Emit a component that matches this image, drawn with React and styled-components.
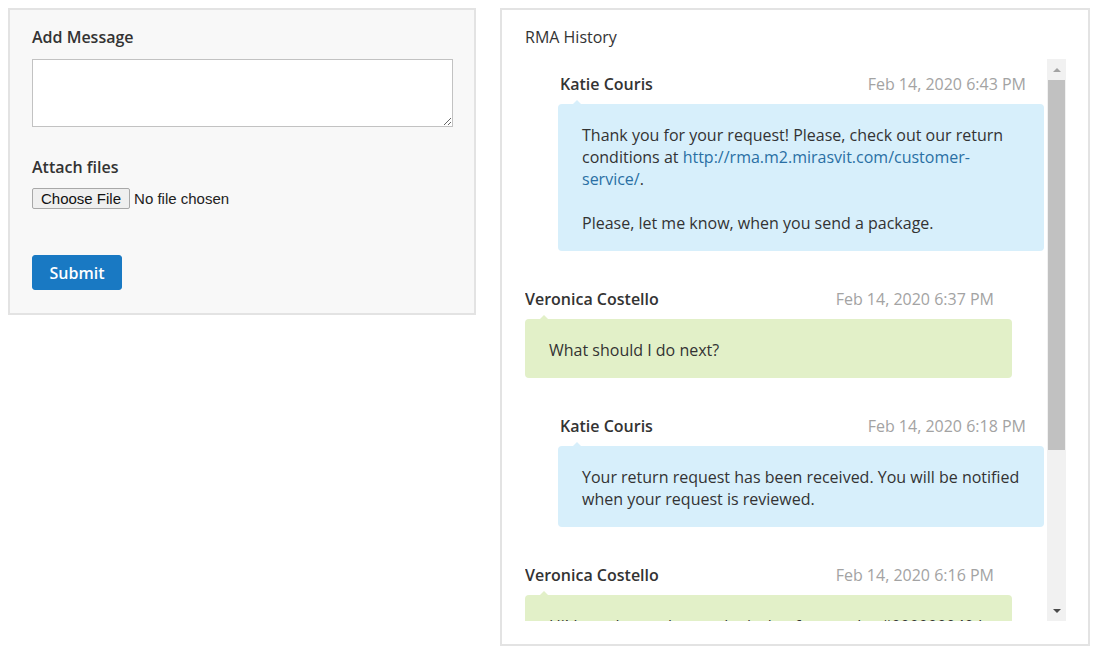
import React from "react";
import styled, { createGlobalStyle } from "styled-components";

const GlobalStyle = createGlobalStyle`
  body {
    margin: 0;
    background: #fff;
    font-family: "Open Sans", "Noto Sans", sans-serif;
    color: #333;
  }
`;

const Page = styled.div`
  display: flex;
  align-items: flex-start;
  gap: 24px;
  padding: 8px;
`;

const FormPanel = styled.form`
  width: 468px;
  box-sizing: border-box;
  background: #f8f8f8;
  border: 2px solid #e3e3e3;
  padding: 16px 22px 23px;
  display: flex;
  flex-direction: column;
`;

const Label = styled.label`
  font-size: 16px;
  line-height: 22px;
  font-weight: 600;
  color: #333;
  margin-bottom: ${(p) => p.$gap || 10}px;
`;

const MessageBox = styled.textarea`
  width: 421px;
  height: 68px;
  box-sizing: border-box;
  border: 1px solid #c2c2c2;
  background: #fff;
  margin: 0 0 29px;
  padding: 6px 8px;
  font: 14px "Open Sans", sans-serif;
`;

const FileInput = styled.input`
  font: 15px "Liberation Sans", Arial, sans-serif;
  color: #222;
  height: 21px;
  margin: 0;
  padding: 0;

  &::file-selector-button {
    font: 15px "Liberation Sans", Arial, sans-serif;
    color: #111;
    height: 21px;
    padding: 0 8px;
    margin: 0 4px 0 0;
    background: #efefef;
    border: 1px solid #a8a8a8;
    border-radius: 2px;
  }
`;

const SubmitButton = styled.button`
  align-self: flex-start;
  margin-top: 46px;
  width: 90px;
  height: 35px;
  background: #1979c3;
  border: 1px solid #1979c3;
  border-radius: 3px;
  color: #fff;
  font: 600 16px "Open Sans", sans-serif;
  cursor: pointer;
`;

const HistoryPanel = styled.section`
  width: 590px;
  height: 638px;
  box-sizing: border-box;
  border: 2px solid #e3e3e3;
  padding: 16px 22px 23px 23px;
  display: flex;
  flex-direction: column;
`;

const Title = styled.div`
  font-size: 16px;
  line-height: 22px;
  color: #333;
  margin-bottom: 11px;
`;

const ScrollBox = styled.div`
  height: 562px;
  display: flex;
`;

const Thread = styled.div`
  flex: 1;
  overflow: hidden;
  padding-top: 14px;
  display: flex;
  flex-direction: column;
  gap: 37px;
`;

const Scrollbar = styled.div`
  width: 19px;
  background: #f1f1f1;
  display: flex;
  flex-direction: column;
`;

const ScrollArrow = styled.div`
  height: 21px;
  flex-shrink: 0;
  display: flex;
  align-items: center;
  justify-content: center;

  &::after {
    content: "";
    border-left: 4px solid transparent;
    border-right: 4px solid transparent;
    ${(p) =>
      p.$down
        ? "border-top: 4px solid #4a4a4a;"
        : "border-bottom: 4px solid #a3a3a3;"}
  }
`;

const ScrollThumb = styled.div`
  height: 370px;
  margin: 0 1px;
  background: #c1c1c1;
`;

const ScrollTrack = styled.div`
  flex: 1;
`;

const Message = styled.div`
  flex-shrink: 0;
  display: flex;
  flex-direction: column;
  gap: 9px;
  padding: ${(p) => (p.$staff ? "0 3px 0 33px" : "0 35px 0 0")};
`;

const Header = styled.div`
  display: flex;
  justify-content: space-between;
  padding: ${(p) => (p.$staff ? "0 18px 0 2px" : "0 18px 0 0")};
  font-size: 16px;
  line-height: 22px;
`;

const Author = styled.span`
  font-weight: 600;
  color: #333;
`;

const Date = styled.span`
  color: #a3a3a3;
`;

const Bubble = styled.div`
  position: relative;
  background: ${(p) => (p.$staff ? "#d7effb" : "#e2f0c8")};
  border-radius: 4px;
  padding: 20px 24px 17px;
  font-size: 16px;
  line-height: 22px;
  color: #333;

  &::before {
    content: "";
    position: absolute;
    top: -4px;
    left: 15px;
    border-left: 4px solid transparent;
    border-right: 4px solid transparent;
    border-bottom: 4px solid ${(p) => (p.$staff ? "#d7effb" : "#e2f0c8")};
  }

  a {
    color: #2a6fa4;
    text-decoration: none;
  }
`;

const messages = [
  {
    staff: true,
    author: "Katie Couris",
    date: "Feb 14, 2020 6:43 PM",
    body: (
      <>
        Thank you for your request! Please, check out our return conditions at{" "}
        <a href="#">http://rma.m2.mirasvit.com/customer-service/</a>.
        <br />
        <br />
        Please, let me know, when you send a package.
      </>
    ),
  },
  {
    staff: false,
    author: "Veronica Costello",
    date: "Feb 14, 2020 6:37 PM",
    body: "What should I do next?",
  },
  {
    staff: true,
    author: "Katie Couris",
    date: "Feb 14, 2020 6:18 PM",
    body: "Your return request has been received. You will be notified when your request is reviewed.",
  },
  {
    staff: false,
    author: "Veronica Costello",
    date: "Feb 14, 2020 6:16 PM",
    body: (
      <>
        Hi! I need to exchange the jacket from order #000000040 I received
        yesterday. It is too small for me, could you please send me a bigger
        size instead?
      </>
    ),
  },
];

const App = () => {
  return (
    <Page>
      <GlobalStyle />
      <FormPanel onSubmit={(e) => e.preventDefault()}>
        <Label htmlFor="msg" $gap={11}>Add Message</Label>
        <MessageBox id="msg" />
        <Label htmlFor="files">Attach files</Label>
        <FileInput id="files" type="file" />
        <SubmitButton type="submit">Submit</SubmitButton>
      </FormPanel>

      <HistoryPanel>
        <Title>RMA History</Title>
        <ScrollBox>
          <Thread>
            {messages.map((m, i) => (
              <Message key={i} $staff={m.staff}>
                <Header $staff={m.staff}>
                  <Author>{m.author}</Author>
                  <Date>{m.date}</Date>
                </Header>
                <Bubble $staff={m.staff}>{m.body}</Bubble>
              </Message>
            ))}
          </Thread>
          <Scrollbar>
            <ScrollArrow />
            <ScrollThumb />
            <ScrollTrack />
            <ScrollArrow $down />
          </Scrollbar>
        </ScrollBox>
      </HistoryPanel>
    </Page>
  );
};

export default App;
